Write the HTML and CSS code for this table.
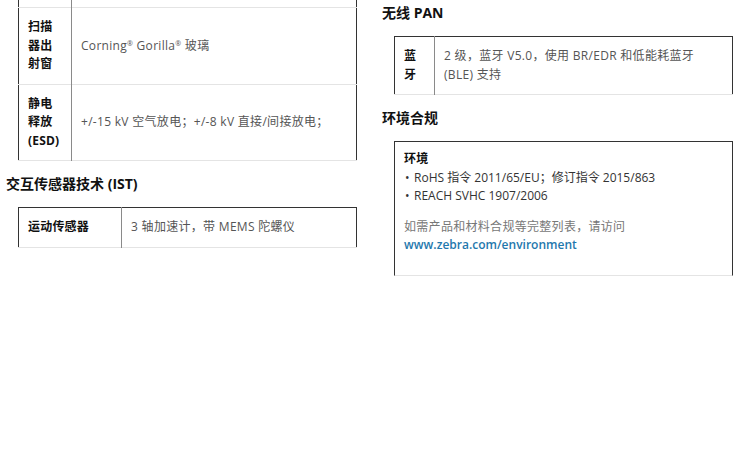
FILE: index.html
```html
<!DOCTYPE html>
<html lang="zh-CN">
<head>
    <meta charset="UTF-8">
    <meta name="viewport" content="width=device-width, initial-scale=1.0">
    <title>规格</title>
    <link rel="stylesheet" href="styles.css">
</head>
<body>
    <div class="page">
        <div class="col">
            <table class="spec spec-cut">
                <tr class="cut">
                    <th class="label-narrow"></th>
                    <td></td>
                </tr>
                <tr>
                    <th>扫描器出射窗</th>
                    <td>Corning<sup>®</sup> Gorilla<sup>®</sup> 玻璃</td>
                </tr>
                <tr>
                    <th>静电释放 (ESD)</th>
                    <td>+/-15 kV 空气放电；+/-8 kV 直接/间接放电；</td>
                </tr>
            </table>

            <h3>交互传感器技术 (IST)</h3>
            <table class="spec">
                <tr>
                    <th class="label-wide">运动传感器</th>
                    <td>3 轴加速计，带 MEMS 陀螺仪</td>
                </tr>
            </table>
        </div>

        <div class="col">
            <h3 class="first">无线 PAN</h3>
            <table class="spec">
                <tr>
                    <th class="label-tiny">蓝牙</th>
                    <td>2 级，蓝牙 V5.0，使用 BR/EDR 和低能耗蓝牙 (BLE) 支持</td>
                </tr>
            </table>

            <h3>环境合规</h3>
            <div class="note">
                <h4>环境</h4>
                <ul>
                    <li>RoHS 指令 2011/65/EU；修订指令 2015/863</li>
                    <li>REACH SVHC 1907/2006</li>
                </ul>
                <p>如需产品和材料合规等完整列表，请访问<br>
                <a href="#">www.zebra.com/environment</a></p>
            </div>
        </div>
    </div>
</body>
</html>
```

FILE: styles.css
```css
body {
    margin: 0;
    padding: 0;
    background-color: #ffffff;
    font-family: "Open Sans", "Noto Sans CJK SC", sans-serif;
    font-size: 12px;
    line-height: 18.5px;
    letter-spacing: 0.3px;
    color: #222222;
}
.page {
    display: grid;
    grid-template-columns: 363px 363px;
    column-gap: 13px;
    padding-left: 6px;
}
h3 {
    margin: 14px 0;
    font-size: 14px;
    line-height: 18px;
    font-weight: bold;
    letter-spacing: 0;
    color: #111111;
}
h3.first {
    margin-top: 4px;
}

/* spec tables */
.spec {
    width: 339px;
    margin-left: 12px;
    border-collapse: collapse;
    table-layout: fixed;
    border-top: 1px solid #333333;
    border-left: 1px solid #333333;
    border-right: 1px solid #333333;
}
.spec-cut {
    border-top: none;
}
.spec tr {
    border-bottom: 1px solid #e4e4e4;
}
.spec th,
.spec td {
    padding: 10px 9px;
    vertical-align: middle;
    text-align: left;
}
.spec th {
    border-right: 1px solid #8a8a8a;
    font-weight: bold;
    letter-spacing: 0.2px;
    color: #111111;
}
.spec td {
    color: #555555;
}
.spec sup {
    font-size: 7px;
    line-height: 0;
    vertical-align: 4px;
}
.spec tr.cut th,
.spec tr.cut td {
    height: 7px;
    padding: 0 9px;
}
.label-narrow {
    width: 34px;
}
.label-wide {
    width: 84px;
}
.label-tiny {
    width: 21px;
}

/* environment box */
.note {
    width: 319px;
    margin-left: 12px;
    padding: 8px 9px 8px;
    border: 1px solid #333333;
    border-bottom-color: #e4e4e4;
}
.note h4 {
    margin: 0;
    font-size: 12px;
    font-weight: bold;
    color: #111111;
}
.note ul {
    list-style: none;
    margin: 0;
    padding: 0;
    letter-spacing: 0;
    color: #333333;
}
.note li::before {
    content: "•";
    display: inline-block;
    width: 9px;
    margin-left: 1px;
}
.note p {
    margin: 12px 0 12px;
    color: #777777;
}
.note a {
    color: #1f78ad;
    font-weight: 600;
    text-decoration: none;
    letter-spacing: 0;
}
```
